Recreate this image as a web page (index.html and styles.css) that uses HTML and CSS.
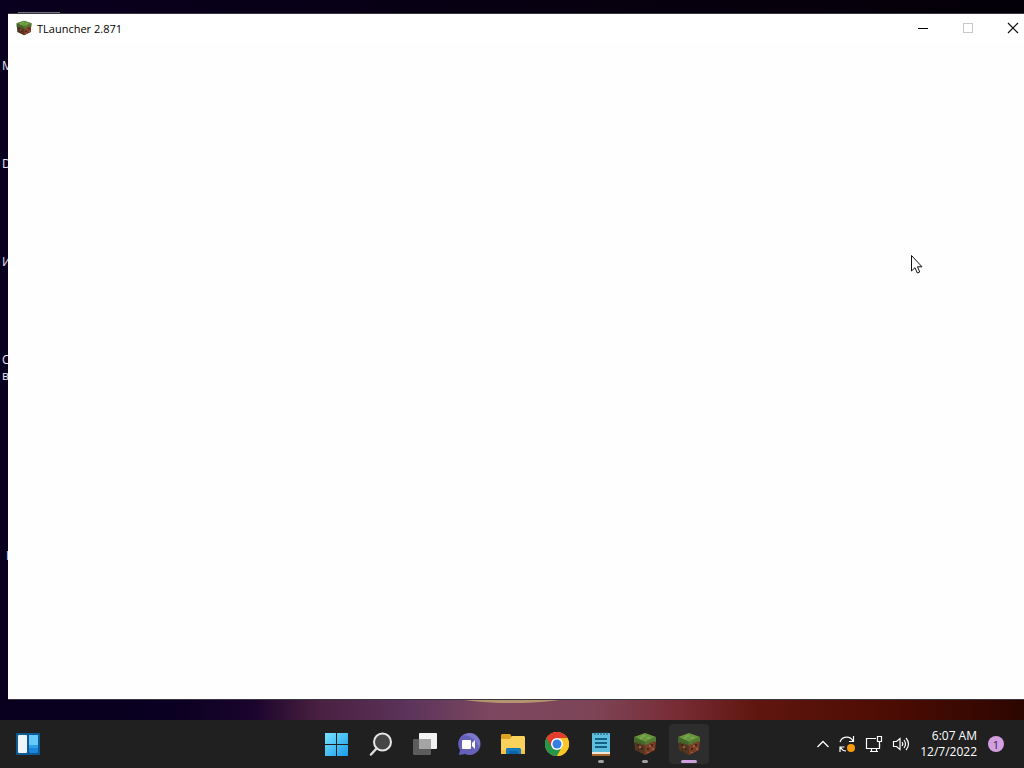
FILE: index.html
```
<!DOCTYPE html>
<html lang="en">
<head>
    <meta charset="UTF-8">
    <meta name="viewport" content="width=device-width, initial-scale=1.0">
    <title>TLauncher 2.871</title>
    <link rel="stylesheet" href="styles.css">
</head>
<body>
    <!-- shared grass block icon -->
    <svg class="defs" aria-hidden="true">
        <symbol id="block" viewBox="0 0 24 24">
            <path d="M12 1 23 5l-1 13-10 5-10-5L1 5z" fill="#573622"/>
            <path d="M12 10 23 5l-1 13-10 5z" fill="#7c3d27"/>
            <path d="M12 1 23 5l-11 5L1 5z" fill="#66963f"/>
            <path d="M1 5l11 5v4l-2-2-1 1-2-2-2 1-1-2-3 1z" fill="#44682c"/>
            <path d="M23 5l-11 5v3l2-1 1 1 2-3 2 1 1-2 3 1z" fill="#4f7d33"/>
            <path d="M8 4l3-1 2 1-3 1zM13 6l3-1 2 1-3 1zM6 6l2-1 2 1-2 1z" fill="#82b052"/>
            <path d="M4 12h2v2H4zM8 16h2v2H8zM5 17h1v2H5zM14 16h2v2h-2zM18 12h2v2h-2z" fill="#3c261b"/>
            <path d="M16 13h2v2h-2zM19 16h2v2h-2zM14 20h2v1h-2zM6 14h2v2H6z" fill="#a2583a"/>
        </symbol>
    </svg>

    <main class="desktop">
        <span class="moon"></span>
        <span class="shortcut shortcut-edge"></span>
        <span class="shortcut row-1">M</span>
        <span class="shortcut row-2">D</span>
        <span class="shortcut row-3">И</span>
        <span class="shortcut row-4">С<br>в</span>
        <span class="shortcut row-5">I</span>

        <section class="window">
            <header class="titlebar">
                <svg class="app-icon"><use href="#block"/></svg>
                <h1 class="title">TLauncher 2.871</h1>
                <button class="win-btn" aria-label="Minimize">
                    <svg width="12" height="12" viewBox="0 0 12 12"><path d="M1 6.5h10" stroke="#000"/></svg>
                </button>
                <button class="win-btn" aria-label="Maximize" disabled>
                    <svg width="12" height="12" viewBox="0 0 12 12"><rect x="1.5" y="1.5" width="9" height="9" fill="none" stroke="#c8c8c8"/></svg>
                </button>
                <button class="win-btn" aria-label="Close">
                    <svg width="12" height="12" viewBox="0 0 12 12"><path d="M1 1l10 10M11 1 1 11" stroke="#111" stroke-width="1.2"/></svg>
                </button>
            </header>
            <div class="content"></div>
        </section>

        <svg class="cursor" width="13" height="20" viewBox="0 0 13 20">
            <path d="M1.5 1.5v15.500l3.500-3.300 2.300 5.300 2.400-1-2.200-5.200h4.500z" fill="#fff" stroke="#111"/>
        </svg>
    </main>

    <footer class="taskbar">
        <div class="widgets">
            <button class="task" aria-label="Widgets">
                <svg width="24" height="24" viewBox="0 0 24 24">
                    <rect width="24" height="22" y="1" rx="1" fill="#0c5b94"/>
                    <rect x="2" y="3" width="9" height="18" rx="1" fill="#f0f5fc"/>
                    <rect x="13" y="3" width="9" height="10" fill="#67c9f8"/>
                    <path d="M13 13h9v7l-1 1h-7l-1-1z" fill="#1c86dc"/>
                    <path d="M13 13h9v3h-9z" fill="#2ea0e6"/>
                </svg>
            </button>
        </div>

        <nav class="apps">
            <button class="task" aria-label="Start">
                <svg width="24" height="24" viewBox="0 0 24 24">
                    <defs>
                        <linearGradient id="win" x1="0" y1="0" x2="24" y2="24" gradientUnits="userSpaceOnUse">
                            <stop offset="0" stop-color="#7be3ff"/>
                            <stop offset="1" stop-color="#169bea"/>
                        </linearGradient>
                    </defs>
                    <path d="M0 1h11v11H0zM12 1h11v11H12zM0 13h11v11H0zM12 13h11v11H12z" fill="url(#win)"/>
                </svg>
            </button>
            <button class="task" aria-label="Search">
                <svg width="24" height="24" viewBox="0 0 24 24">
                    <path d="M8 16l-6 6.500" stroke="#dcdcdc" stroke-width="2.500" stroke-linecap="round"/>
                    <circle cx="13.500" cy="10" r="8.500" fill="#464646" stroke="#e6e6e6" stroke-width="2"/>
                </svg>
            </button>
            <button class="task" aria-label="Task view">
                <svg width="26" height="24" viewBox="0 0 26 24">
                    <rect x="7" y="1" width="18" height="16" rx="1" fill="#f2f2f2"/>
                    <rect x="1" y="7" width="18" height="16" rx="1" fill="#5c5c5c"/>
                    <path d="M7 7h12v10H7z" fill="#a4a4a4"/>
                </svg>
            </button>
            <button class="task" aria-label="Chat">
                <svg width="24" height="24" viewBox="0 0 24 24">
                    <path d="M12 1a11 11 0 1 1-4 21l-6 1 1-5A11 11 0 0 1 12 1z" fill="#6561b9"/>
                    <path d="M12 1a11 11 0 0 1 11 11l-1 4C20 8 15 4 6 3z" fill="#7f79cb"/>
                    <rect x="5" y="8" width="9" height="9" rx="1" fill="#fff"/>
                    <path d="M15 11l3-3v9l-3-3z" fill="#fff"/>
                </svg>
            </button>
            <button class="task" aria-label="File Explorer">
                <svg width="24" height="24" viewBox="0 0 24 24">
                    <path d="M0 3l1-1h8l2 3v4H0z" fill="#dda21f"/>
                    <path d="M0 7h9l2-3h12l1 1v17H0z" fill="#fbd35c"/>
                    <path d="M0 18h24v4H0z" fill="#f3c344"/>
                    <path d="M5 22v-5l1-1h13l1 1v5z" fill="#1977bd"/>
                    <path d="M8 19h9v3H8z" fill="#0c63a5"/>
                </svg>
            </button>
            <button class="task" aria-label="Chrome">
                <svg width="24" height="24" viewBox="0 0 24 24">
                    <circle cx="12" cy="12" r="12" fill="#fcc629"/>
                    <path d="M12 12 1.600 6A12 12 0 0 0 12 24l5.200-9z" fill="#27964a"/>
                    <path d="M12 6h10.400a12 12 0 0 1-10.400 18l5.200-9z" fill="#fcc629"/>
                    <path d="M1.600 6a12 12 0 0 1 20.800 0H12l-5.200 9z" fill="#e33b2e"/>
                    <circle cx="12" cy="12" r="6" fill="#fff"/>
                    <circle cx="12" cy="12" r="4.500" fill="#347ee5"/>
                </svg>
            </button>
            <button class="task running" aria-label="Notepad">
                <svg width="20" height="24" viewBox="0 0 20 24">
                    <rect x="1" y="1" width="18" height="21" rx="1" fill="#5ebede"/>
                    <path d="M1 20h18v3H1z" fill="#f0e7d8"/>
                    <path d="M1 22h18v2H1z" fill="#a5672c"/>
                    <path d="M4 7h12M4 11h12M4 15h12" stroke="#155f83" stroke-width="2"/>
                    <path d="M4 0v3M7 0v3M10 0v3M13 0v3M16 0v3" stroke="#194f6a"/>
                </svg>
            </button>
            <button class="task running" aria-label="Minecraft">
                <svg class="block-icon"><use href="#block"/></svg>
            </button>
            <button class="task active" aria-label="TLauncher">
                <svg class="block-icon"><use href="#block"/></svg>
            </button>
        </nav>

        <div class="tray">
            <button class="tray-btn" aria-label="Show hidden icons">
                <svg width="14" height="16" viewBox="0 0 14 16"><path d="M1.500 11 7 5.500l5.500 5.500" fill="none" stroke="#fff" stroke-width="1.300"/></svg>
            </button>
            <button class="tray-btn" aria-label="Updates">
                <svg width="18" height="18" viewBox="0 0 18 18">
                    <path d="M2 7a7 7 0 0 1 13-1M15.500 1v5.500H11M2 17v-5h4.500M2.500 12.500A7 7 0 0 0 8 16" fill="none" stroke="#fff" stroke-width="1.200"/>
                    <circle cx="13" cy="13" r="4" fill="#f79a0c"/>
                </svg>
            </button>
            <button class="tray-btn network" aria-label="Network">
                <svg width="18" height="18" viewBox="0 0 18 18">
                    <path d="M11 3.500H1.500v10h13V9M5 16.500h8M6.500 14v2M11.500 14v2" fill="none" stroke="#fff" stroke-width="1.200"/>
                    <path d="M12.500 1.500h4v5h-4zM14.500 7v5" fill="none" stroke="#fff" stroke-width="1.200"/>
                </svg>
            </button>
            <button class="tray-btn" aria-label="Volume">
                <svg width="18" height="16" viewBox="0 0 18 16">
                    <path d="M1.500 5.500h3L8 2.500v11l-3.500-3h-3zM10 6q1.500 2 0 4M12 4q3 4 0 8M14 2q5 6 0 12" fill="none" stroke="#fff" stroke-width="1.200"/>
                </svg>
            </button>
            <div class="clock">
                <time>6:07 AM</time>
                <time>12/7/2022</time>
            </div>
            <button class="badge" aria-label="Notifications">1</button>
        </div>
    </footer>
</body>
</html>
```
FILE: styles.css
```
* {
    box-sizing: border-box;
}

body {
    display: flex;
    flex-direction: column;
    height: 100vh;
    margin: 0;
    overflow: hidden;
    background-color: #202020;
    font-family: "Open Sans", "Noto Sans", sans-serif;
    font-size: 12px;
}

button {
    display: flex;
    justify-content: center;
    align-items: center;
    padding: 0;
    border: none;
    background: none;
    font-family: inherit;
}

.defs {
    position: absolute;
    width: 0;
    height: 0;
}

/* Desktop */
.desktop {
    position: relative;
    display: flex;
    flex: 1;
    padding: 13px 0 20px 8px;
    overflow: hidden;
    background: linear-gradient(to right, #09001f, #06000f 60%, #040008) top / 100% 14px no-repeat,
        linear-gradient(to right, #09001f 0%, #0a0021 17%, #1c052e 25%, #49203f 31%, #5c345c 40%, #7d475f 48%, #7d4457 58%, #782c35 66%, #5f160f 74%, #500d04 85%, #2c0600 100%);
}

.moon {
    position: absolute;
    left: 50%;
    bottom: 17px;
    width: 220px;
    height: 60px;
    border-radius: 50%;
    background-color: #b4956f;
    transform: translateX(-50%);
}

.shortcut {
    position: absolute;
    left: 2px;
    color: #e8e4f0;
    line-height: 16px;
}

.shortcut-edge {
    top: 12px;
    left: 18px;
    width: 42px;
    height: 2px;
    background-color: #77727f;
}

.row-1 { top: 58px; }
.row-2 { top: 156px; }
.row-3 { top: 254px; }
.row-4 { top: 352px; }
.row-5 { top: 548px; left: 6px; }

/* Launcher window, runs past the right edge of the screen */
.window {
    position: relative;
    display: flex;
    flex-direction: column;
    flex: 1;
    margin-right: -12px;
    border: 1px solid #39363f;
    border-left: none;
    background-color: #fff;
}

.titlebar {
    display: flex;
    align-items: center;
    height: 28px;
    padding-left: 8px;
}

.app-icon {
    width: 16px;
    height: 16px;
}

.title {
    flex: 1;
    margin: 0 0 0 5px;
    font-size: 11px;
    font-weight: 400;
    color: #000;
}

.win-btn {
    width: 45px;
    height: 28px;
}

.content {
    flex: 1;
    background-color: #fefefe;
}

.cursor {
    position: absolute;
    left: 910px;
    top: 254px;
}

/* Taskbar */
.taskbar {
    display: grid;
    grid-template-columns: 1fr auto 1fr;
    align-items: center;
    height: 48px;
    background-color: #202020;
    color: #fff;
}

.widgets {
    padding-left: 8px;
}

.apps {
    display: flex;
    gap: 4px;
    padding-left: 2px;
}

.task {
    position: relative;
    width: 40px;
    height: 40px;
    border-radius: 4px;
}

.block-icon {
    width: 24px;
    height: 24px;
}

.running::after,
.active::after {
    content: "";
    position: absolute;
    bottom: 1px;
    width: 6px;
    height: 3px;
    border-radius: 2px;
    background-color: #a0a0a0;
}

.active {
    background-color: #2d2d2d;
}

.active::after {
    width: 16px;
    background-color: #cf9fdb;
}

.tray {
    display: flex;
    justify-content: flex-end;
    align-items: center;
    padding-right: 20px;
}

.tray-btn {
    width: 24px;
    height: 40px;
}

.network {
    width: 30px;
}

.clock {
    display: flex;
    flex-direction: column;
    align-items: flex-end;
    width: 64px;
    margin-right: 11px;
    font-size: 12px;
    line-height: 16px;
}

.badge {
    width: 16px;
    height: 16px;
    border-radius: 50%;
    background-color: #d49fe0;
    color: #30203a;
    font-size: 11px;
}
```
